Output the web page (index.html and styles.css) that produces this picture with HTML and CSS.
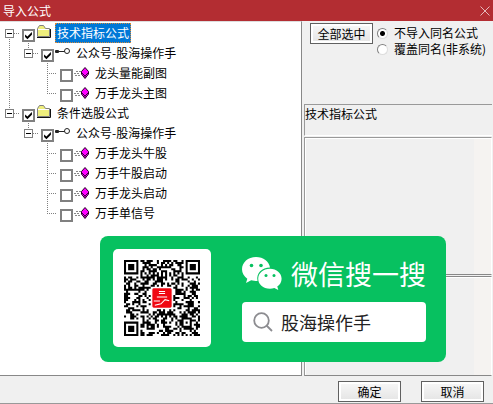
FILE: index.html
```
<!DOCTYPE html>
<html lang="zh-CN">
<head>
<meta charset="utf-8">
<title>导入公式</title>
<link rel="stylesheet" href="styles.css">
</head>
<body>
<svg width="0" height="0" class="defs" aria-hidden="true">
  <symbol id="folder" viewBox="0 0 16 13"><path d="M1.500 11.500V3.500L3.500 .5H7.500L9.500 3.500H13.500V11.500Z" fill="#eeee7c" stroke="#808080"/><path d="M2 4.500H13" stroke="#fff"/><path d="M1 12.500H14.500V4" fill="none" stroke="#111"/></symbol>
  <symbol id="key" viewBox="0 0 16 10"><path d="M1 5.500H10" stroke="#222" fill="none"/><rect x="0" y="4" width="4" height="3" rx="1" fill="#222"/><circle cx="12" cy="5" r="2.500" fill="#fff" stroke="#222"/></symbol>
  <symbol id="gem" viewBox="0 0 16 12"><path d="M2 4.500H7M0 6.500H6M1 8.500H7" stroke="#888" stroke-dasharray="2 1"/><path d="M11 .5L14.500 4.500V7L11 11.500L7.500 7V4.500Z" fill="#f0f" stroke="#202"/><path d="M8 6L11 9L14 6M11 9V11" stroke="#404" fill="none"/></symbol>
</svg>
<div class="dialog">
  <header class="titlebar">
    <h1>导入公式</h1>
    <button class="close" aria-label="关闭"><svg viewBox="0 0 10 10" width="10" height="10"><path d="M.5 .5L9.500 9.500M9.500 .5L.5 9.500" stroke="#e5b9bb"/></svg></button>
  </header>
  <main class="content">
    <section class="tree">
      <div class="row"><span class="cell down"><button class="toggle" aria-label="折叠"></button></span><input type="checkbox" id="c0" checked><svg class="icon"><use href="#folder"/></svg><label for="c0" class="selected">技术指标公式</label></div>
      <div class="row"><span class="cell line"></span><span class="cell up"><button class="toggle" aria-label="折叠"></button></span><input type="checkbox" id="c1" checked><svg class="icon key"><use href="#key"/></svg><label for="c1">公众号-股海操作手</label></div>
      <div class="row"><span class="cell line"></span><span class="cell"></span><span class="cell line branch"></span><input type="checkbox" id="c2"><svg class="icon gem"><use href="#gem"/></svg><label for="c2">龙头量能副图</label></div>
      <div class="row"><span class="cell line"></span><span class="cell"></span><span class="cell up branch"></span><input type="checkbox" id="c3"><svg class="icon gem"><use href="#gem"/></svg><label for="c3">万手龙头主图</label></div>
      <div class="row"><span class="cell up"><button class="toggle" aria-label="折叠"></button></span><input type="checkbox" id="c4" checked><svg class="icon"><use href="#folder"/></svg><label for="c4">条件选股公式</label></div>
      <div class="row"><span class="cell"></span><span class="cell up"><button class="toggle" aria-label="折叠"></button></span><input type="checkbox" id="c5" checked><svg class="icon key"><use href="#key"/></svg><label for="c5">公众号-股海操作手</label></div>
      <div class="row"><span class="cell"></span><span class="cell"></span><span class="cell line branch"></span><input type="checkbox" id="c6"><svg class="icon gem"><use href="#gem"/></svg><label for="c6">万手龙头牛股</label></div>
      <div class="row"><span class="cell"></span><span class="cell"></span><span class="cell line branch"></span><input type="checkbox" id="c7"><svg class="icon gem"><use href="#gem"/></svg><label for="c7">万手牛股启动</label></div>
      <div class="row"><span class="cell"></span><span class="cell"></span><span class="cell line branch"></span><input type="checkbox" id="c8"><svg class="icon gem"><use href="#gem"/></svg><label for="c8">万手龙头启动</label></div>
      <div class="row"><span class="cell"></span><span class="cell"></span><span class="cell up branch"></span><input type="checkbox" id="c9"><svg class="icon gem"><use href="#gem"/></svg><label for="c9">万手单信号</label></div>
    </section>
    <section class="side">
      <div class="options">
        <button class="btn">全部选中</button>
        <div class="radios">
          <div><input type="radio" name="mode" id="r1" checked><label for="r1">不导入同名公式</label></div>
          <div><input type="radio" name="mode" id="r2"><label for="r2">覆盖同名(非系统)</label></div>
        </div>
      </div>
      <div class="caption">技术指标公式</div>
      <textarea class="pane" readonly aria-label="公式说明"></textarea>
      <textarea class="pane last" readonly aria-label="公式用法"></textarea>
    </section>
  </main>
  <footer class="actions"><button class="btn">确定</button><button class="btn">取消</button></footer>
  <aside class="card">
    <div class="code"><svg id="qr" viewBox="0 0 37 37" role="img" aria-label="二维码"></svg></div>
    <div class="find">
      <div class="brand">
        <svg viewBox="0 0 40 34" width="40" height="34" aria-hidden="true">
          <path d="M14 0C6 0 0 5.500 0 12.300C0 16.200 2 19.500 5.300 21.700L4 26L9.200 23.300C11 23.900 13 24 15.500 24C14 16 20 10.500 28 10.500C27 4.500 21.500 0 14 0Z" fill="#fff"/>
          <path d="M28 11.700C21 11.700 16.200 16.200 16.200 21.700C16.200 27.300 21 31.700 28 31.700C29.500 31.700 31 31.500 32.300 31L36.300 33L35.300 29.500C38 27.700 39.600 25 39.600 21.700C39.600 16.200 34.500 11.700 28 11.700Z" fill="#fff"/>
          <g fill="#07c160"><circle cx="9.500" cy="8.500" r="1.800"/><circle cx="19" cy="8.500" r="1.800"/><circle cx="24" cy="18.500" r="1.500"/><circle cx="32" cy="18.500" r="1.500"/></g>
        </svg>
        <span>微信搜一搜</span>
      </div>
      <div class="search">
        <svg viewBox="0 0 20 20" width="20" height="20" aria-hidden="true"><circle cx="8.500" cy="8.500" r="7.300" fill="none" stroke="#8c8c90" stroke-width="1.800"/><path d="M13.500 13.500L19 19" stroke="#8c8c90" stroke-width="1.800"/></svg>
        <input type="text" value="股海操作手" aria-label="搜索">
      </div>
    </div>
  </aside>
</div>
<script src="qr.js"></script>
</body>
</html>
```
FILE: styles.css
```
* { box-sizing: border-box; }
body { margin: 0; font: 12px/20px "Noto Sans CJK SC", sans-serif; color: #000; background: #f0f0f0; }
button, input, textarea { font: inherit; margin: 0; padding: 0; }
.defs { position: absolute; }
.dialog { position: relative; display: flex; flex-direction: column; min-height: 100vh; border-bottom: 1px solid #999; }
.titlebar { display: flex; justify-content: space-between; align-items: center; height: 21px; padding: 0 3px; background: #b32d32; color: #fff; }
.titlebar h1 { margin: 0; font-size: 12px; line-height: 18px; font-weight: 400; }
.close { display: flex; border: 0; background: none; }
.content { flex: 1; display: grid; grid-template-columns: minmax(0, 1fr) 191px; }
.tree { padding-top: 1px; background: #fff; border: solid #888; border-width: 1px 1px 1px 0; border-top-color: #ddd; }
.row { display: flex; align-items: flex-start; height: 20px; }
.cell { --dots: repeating-linear-gradient(#808080 0 1px, transparent 1px 2px); flex: none; display: flex; align-items: center; width: 19px; height: 20px; padding-left: 5px; background-repeat: no-repeat; }
.line { background-image: var(--dots); background-size: 1px 20px; background-position: 9px 0; }
.up { background-image: var(--dots); background-size: 1px 10px; background-position: 9px 0; }
.down { background-image: var(--dots); background-size: 1px 10px; background-position: 9px 10px; }
.cell:has(.toggle)::after, .branch::after { content: ""; flex: 1; height: 1px; background: repeating-linear-gradient(90deg, #808080 0 1px, transparent 1px 2px); }
.branch::after { margin-left: 4px; }
.toggle { flex: none; width: 9px; height: 9px; border: 1px solid #808080; border-radius: 0; background: linear-gradient(#000, #000) center / 5px 1px no-repeat #fff; }
.row input { appearance: none; flex: none; width: 13px; height: 13px; margin: 6px 1px 0 3px; border: 2px solid #808080; background: #fff; }
.row input:checked::after { content: ""; display: block; width: 9px; height: 9px; background: #000; clip-path: polygon(12% 38%, 38% 60%, 88% 10%, 88% 42%, 38% 92%, 12% 68%); }
.icon { flex: none; width: 16px; height: 13px; margin-top: 2px; }
.key { height: 10px; margin-top: 3px; }
.gem { height: 12px; margin-top: 4px; }
.row label { height: 20px; margin-left: 3px; padding: 0 2px; line-height: 19px; white-space: nowrap; }
.row .selected { background: #0078d7; color: #fff; outline: 1px dotted #d88b3b; outline-offset: -1px; }
.side { display: flex; flex-direction: column; min-width: 0; padding: 2px 1px 0 2px; }
.options { display: flex; height: 81px; padding-left: 6px; }
.btn { flex: none; width: 63px; height: 21px; border: 1px solid #606060; border-radius: 0; color: #000; background: linear-gradient(#f8f8f8, #e4e4e4); box-shadow: inset 0 0 0 2px #fff; line-height: 17px; }
.radios { margin: 2px 0 0 4px; line-height: 16px; white-space: nowrap; }
.radios div { display: flex; align-items: center; height: 16px; }
.radios input { appearance: none; width: 11px; height: 11px; margin-right: 6px; border: 1px solid; border-color: #808080 #ddd #ddd #808080; border-radius: 50%; background: #fff; }
.radios input:checked { background: radial-gradient(#000 0 2px, #fff 3px); }
.caption { height: 32px; border: solid #999; border-width: 1px 0 0 1px; border-bottom: 1px solid #fff; line-height: 18px; }
.pane { flex: 138 1 0; width: 100%; min-height: 0; margin-top: 1px; border: 1px solid #999; border-right-color: #fff; border-bottom-color: #fff; border-radius: 0; resize: none; outline: 0; background: linear-gradient(#f5f3f1, #f5f3f1) right / 17px 100% no-repeat #f0f0f0; box-shadow: inset 1px 1px #fff; }
.pane:not(.last) { border-bottom-color: #888; }
.last { flex-grow: 100; border-top-color: #888; border-bottom-color: #888; }
.actions { display: flex; justify-content: flex-end; gap: 20px; padding: 5px 9px 1px; }
.card { position: absolute; left: 100px; top: 236px; display: flex; align-items: center; gap: 31px; padding: 13px 20px 15px 13px; border-radius: 8px; background: #07c160; }
.code { padding: 11px; border-radius: 5px; background: #fff; }
.code svg { display: block; width: 76px; height: 76px; }
.find { display: flex; flex-direction: column; gap: 10px; width: 184px; padding-top: 2px; }
.brand { display: flex; align-items: center; justify-content: space-between; height: 36px; color: #fff; font-size: 27px; line-height: 36px; white-space: nowrap; }
.search { display: flex; align-items: center; gap: 8px; height: 40px; padding: 0 11px; border-radius: 4px; background: #fff; }
.search svg { flex: none; }
.search input { flex: 1; min-width: 0; border: 0; outline: 0; background: none; color: #222; font-size: 18px; line-height: 26px; }
```
FILE: qr.js
```
const size = 37;
let seed = 20731;
const next = () => {
  seed ^= seed << 13;
  seed ^= seed >>> 17;
  seed ^= seed << 5;
  return (seed >>> 0) / 4294967296;
};
const reserved = (x, y) =>
  (x < 8 && y < 8) || (x > 28 && y < 8) || (x < 8 && y > 28) ||
  (x > 12 && x < 24 && y > 12 && y < 24) ||
  (x > 27 && x < 33 && y > 27 && y < 33);
let path = "";
for (let y = 0; y < size; y++) {
  for (let x = 0; x < size; x++) {
    const dark = next() < 0.52;
    if (reserved(x, y)) continue;
    const on = y === 6 ? x % 2 === 0 : x === 6 ? y % 2 === 0 : dark;
    if (on) path += `M${x} ${y}h1v1h-1z`;
  }
}
for (const [x, y] of [[0, 0], [30, 0], [0, 30]]) {
  path += `M${x} ${y}h7v7h-7zM${x + 1} ${y + 1}v5h5v-5zM${x + 2} ${y + 2}h3v3h-3z`;
}
path += "M28 28h5v5h-5zM29 29v3h3v-3zM30 30h1v1h-1z";
document.getElementById("qr").innerHTML =
  `<path d="${path}" fill="#000"/>
   <rect x="13.500" y="13.500" width="10" height="10" rx="1" fill="#f00812" stroke="#fff" stroke-width=".6"/>
   <path d="M17 15.300h3M17 16.300h3M16 18h5M14.500 20h3M15 22l3-.7 2-2 2 .5" fill="none" stroke="#fff" stroke-width=".5"/>`;
```
